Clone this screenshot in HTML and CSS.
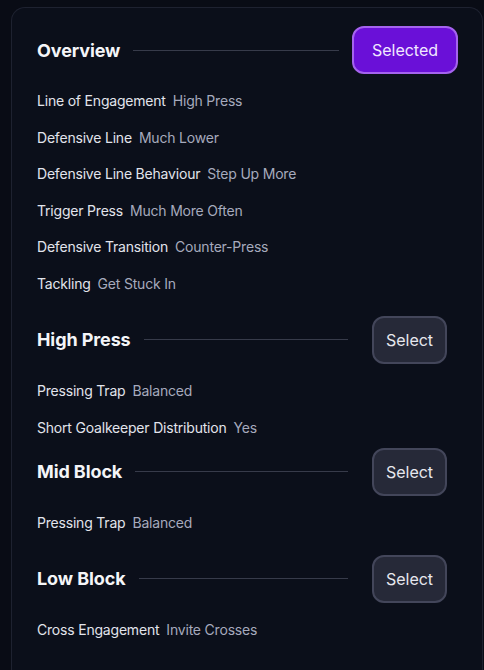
FILE: index.html
```html
<!DOCTYPE html>
<html lang="en">
<head>
<meta charset="utf-8">
<title>Tactics</title>
<link rel="stylesheet" href="styles.css">
</head>
<body>
<div class="card">
  <section class="section">
    <div class="head">
      <h2 class="title">Overview</h2>
      <div class="rule rule-short"></div>
      <button class="btn btn-selected">Selected</button>
    </div>
    <ul class="rows">
      <li class="row"><span class="label">Line of Engagement</span><span class="value">High Press</span></li>
      <li class="row"><span class="label">Defensive Line</span><span class="value">Much Lower</span></li>
      <li class="row"><span class="label">Defensive Line Behaviour</span><span class="value">Step Up More</span></li>
      <li class="row"><span class="label">Trigger Press</span><span class="value">Much More Often</span></li>
      <li class="row"><span class="label">Defensive Transition</span><span class="value">Counter-Press</span></li>
      <li class="row"><span class="label">Tackling</span><span class="value">Get Stuck In</span></li>
    </ul>
  </section>
  <section class="section section-tight">
    <div class="head">
      <h2 class="title">High Press</h2>
      <div class="rule"></div>
      <button class="btn">Select</button>
    </div>
    <ul class="rows">
      <li class="row"><span class="label">Pressing Trap</span><span class="value">Balanced</span></li>
      <li class="row"><span class="label">Short Goalkeeper Distribution</span><span class="value">Yes</span></li>
    </ul>
  </section>
  <section class="section">
    <div class="head">
      <h2 class="title">Mid Block</h2>
      <div class="rule"></div>
      <button class="btn">Select</button>
    </div>
    <ul class="rows">
      <li class="row"><span class="label">Pressing Trap</span><span class="value">Balanced</span></li>
    </ul>
  </section>
  <section class="section">
    <div class="head">
      <h2 class="title">Low Block</h2>
      <div class="rule"></div>
      <button class="btn">Select</button>
    </div>
    <ul class="rows">
      <li class="row"><span class="label">Cross Engagement</span><span class="value">Invite Crosses</span></li>
    </ul>
  </section>
</div>
</body>
</html>
```
FILE: styles.css
```css
html, body {
  margin: 0;
  padding: 0;
  background: #090c15;
}
body {
  font-family: Inter, "Noto Sans", sans-serif;
  color: #e4e6ee;
  padding: 7px 1px 0 11px;
  height: 670px;
  box-sizing: border-box;
  overflow: hidden;
}
.card {
  box-sizing: border-box;
  height: 663px;
  border: 1px solid #1e2230;
  border-bottom: none;
  border-radius: 14px 14px 0 0;
  background: #0b0f1a;
  padding: 18px 24px 0 25px;
}
.section {
  margin-bottom: 22px;
}
.section-tight {
  margin-bottom: 10px;
}
.head {
  display: flex;
  align-items: center;
  height: 48px;
}
.title {
  margin: 0;
  font-size: 18px;
  font-weight: 700;
  color: #f4f5f8;
  letter-spacing: -0.1px;
}
.rule {
  flex: 1;
  height: 1px;
  background: #373b4a;
  margin: 0 24px 0 13px;
}
.rule-short {
  margin-right: 13px;
}
.btn {
  font-family: inherit;
  font-size: 16px;
  color: #e6e7ee;
  background: #262938;
  border: 2px solid #43465a;
  border-radius: 12px;
  height: 48px;
  width: 75px;
  margin-right: 11px;
  padding: 0;
}
.btn-selected {
  background: #6a10d8;
  border-color: #a563ee;
  color: #f1e8ff;
  width: 106px;
  margin-right: 0;
}
.rows {
  list-style: none;
  margin: 17px 0 0;
  padding: 0;
  display: flex;
  flex-direction: column;
  gap: 16.6px;
}
.row {
  display: flex;
  gap: 7px;
  font-size: 14px;
  line-height: 20px;
  letter-spacing: -0.2px;
}
.label {
  color: #e2e4ec;
}
.value {
  color: #a6aabd;
}
```
